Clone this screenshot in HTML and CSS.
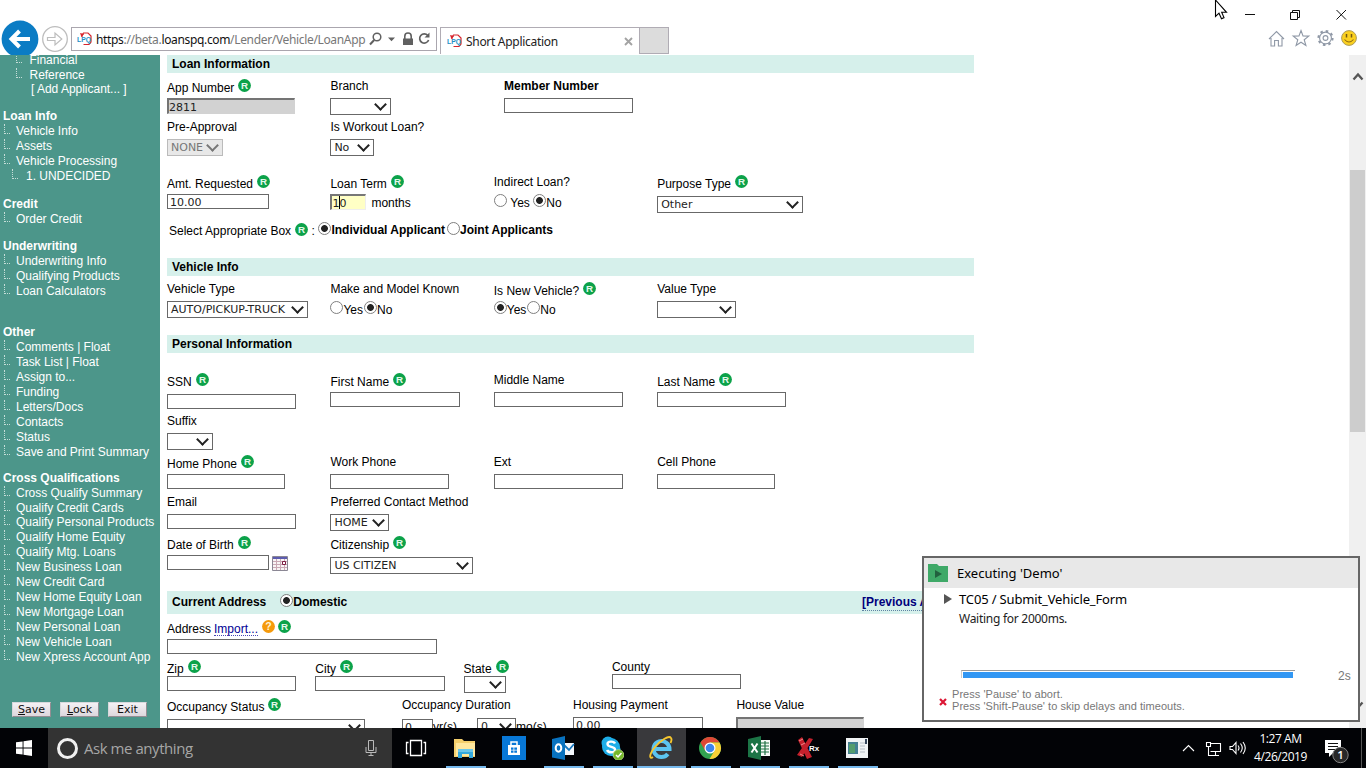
FILE: index.html
```
<!DOCTYPE html>
<html lang="en">
<head>
<meta charset="utf-8">
<title>Short Application</title>
<link rel="stylesheet" href="styles.css">
</head>
<body>
<svg class="sprite" aria-hidden="true">
  <symbol id="req" viewBox="0 0 13 13"><circle cx="6.5" cy="6.5" r="6.4" fill="#0ca24a"/><text x="6.5" y="10" text-anchor="middle" font-family="Liberation Sans, sans-serif" font-size="9.8" font-weight="bold" fill="#e4f7ea">R</text></symbol>
  <symbol id="help" viewBox="0 0 13 13"><circle cx="6.5" cy="6.5" r="6.4" fill="#f59a0c"/><text x="6.5" y="10.2" text-anchor="middle" font-family="Liberation Sans, sans-serif" font-size="10.5" font-weight="bold" fill="#fff5d8">?</text></symbol>
  <symbol id="lpq" viewBox="0 0 15 14"><path d="M5 5V3.5L6.5 1H11L14 4V10L12 12.5H6.5" fill="none" stroke="#d6242c" stroke-width="1.2"/><path d="M3 1L7.2 2L4.4 5Z" fill="#d6242c"/><text x="0" y="10.4" font-family="Liberation Sans, sans-serif" font-size="6.8" font-weight="bold" fill="#1e8fc6">LPQ</text></symbol>
</svg>

<header class="chrome">
  <div class="nav">
    <svg class="back" viewBox="0 0 38 38"><circle cx="19" cy="19" r="18.4" fill="#0b7cc4"/><path d="M29 19H11M18.5 11L10.5 19L18.5 27" fill="none" stroke="#fff" stroke-width="4"/></svg>
    <svg class="forward" viewBox="0 0 28 28"><circle cx="14" cy="14" r="12.3" fill="#fff" stroke="#bdbdbd" stroke-width="1.3"/><path d="M6.5 12.5H14V8L20.8 14L14 20V15.5H6.5Z" fill="#fff" stroke="#bdbdbd" stroke-width="1.2"/></svg>
    <div class="address">
      <svg class="fav"><use href="#lpq"/></svg>
      <span class="url"><b>https</b>://beta.<b>loanspq.com</b>/Lender/Vehicle/LoanApp</span>
      <svg class="addr-icons" viewBox="0 0 64 18"><g fill="none" stroke="#606060"><circle cx="9" cy="7" r="3.8" stroke-width="1.5"/><path d="M6.2 10L2 14.5" stroke-width="2"/><path d="M36.8 9V6.2a3.2 3.2 0 0 1 6.4 0V9" stroke-width="1.6"/><path d="M59.8 5.5A4.6 4.6 0 1 0 60.6 10" stroke-width="1.7"/></g><path d="M20 7.5h7l-3.5 3.8zM35 8.5h10v6.5H35zM61.5 2.5v5h-5z" fill="#606060"/></svg>
    </div>
  </div>
  <div class="tab"><svg class="fav"><use href="#lpq"/></svg><span class="tab-title">Short Application</span><svg class="tab-x" viewBox="0 0 9 9"><path d="M1 1L8 8M8 1L1 8" stroke="#a3a3a3" stroke-width="1.9"/></svg></div>
  <div class="newtab"></div>
  <div class="window-side">
    <svg class="caption" viewBox="0 0 106 14"><g fill="none" stroke="#111" stroke-width="1"><path d="M0 7.5h10"/><path d="M45.500 5.500h7v7h-7zM47.500 5.500v-2h7v7h-2"/><path d="M91.500 3L101 12.500M101 3L91.500 12.500"/></g></svg>
    <svg class="tools" viewBox="0 0 92 20"><g fill="none" stroke="#8f98a6" stroke-width="1.1"><path d="M2 11L9.500 3.500L17 11M4 10v8h3.600v-5.500h3.800V18H15v-8"/><path d="M34 2.500l2 5.400 5.800.2-4.600 3.600 1.700 5.800-4.900-3.300-4.900 3.300 1.700-5.800-4.600-3.600 5.800-.2z"/><circle cx="58.500" cy="10" r="5.900"/><circle cx="58.500" cy="10" r="7" stroke-width="2.200" stroke-dasharray="2.500 3"/><circle cx="58.500" cy="10" r="2.400"/></g><circle cx="82" cy="10" r="7.400" fill="#fbd01f" stroke="#ad9c59"/><path d="M79.500 6v3.500M84.500 6v3.500" stroke="#735915" stroke-width="1.500"/><path d="M77.500 11.500q4.500 5 9 0" fill="none" stroke="#8d6b13" stroke-width="1.100"/></svg>
  </div>
</header>

<main class="viewport">
  <aside class="side">
    <ul class="group group-top"><li class="deep">Financial</li><li class="deep">Reference</li><li class="add">[ Add Applicant... ]</li></ul>
    <h3 class="g12">Loan Info</h3>
    <ul class="group"><li>Vehicle Info</li><li>Assets</li><li>Vehicle Processing</li><li class="sub">1. UNDECIDED</li></ul>
    <h3 class="g13">Credit</h3>
    <ul class="group"><li>Order Credit</li></ul>
    <h3 class="g12">Underwriting</h3>
    <ul class="group"><li>Underwriting Info</li><li>Qualifying Products</li><li>Loan Calculators</li></ul>
    <h3 class="g26">Other</h3>
    <ul class="group"><li>Comments | Float</li><li>Task List | Float</li><li>Assign to...</li><li>Funding</li><li>Letters/Docs</li><li>Contacts</li><li>Status</li><li>Save and Print Summary</li></ul>
    <h3>Cross Qualifications</h3>
    <ul class="group"><li>Cross Qualify Summary</li><li class="short">Qualify Credit Cards</li><li>Qualify Personal Products</li><li>Qualify Home Equity</li><li>Qualify Mtg. Loans</li><li>New Business Loan</li><li>New Credit Card</li><li>New Home Equity Loan</li><li>New Mortgage Loan</li><li>New Personal Loan</li><li>New Vehicle Loan</li><li>New Xpress Account App</li></ul>
    <div class="actions"><button><u>S</u>ave</button><button><u>L</u>ock</button><button>Exit</button></div>
  </aside>

  <section class="form">
    <h2>Loan Information</h2>
    <div class="row h41 mt5">
      <div class="field"><div class="label req">App Number<svg><use href="#req"/></svg></div><div class="input readonly w128">2811</div></div>
      <div class="field member-gap"><div class="label">Branch</div><div class="select w61"></div></div>
      <div class="field"><div class="label bold">Member Number</div><div class="input w129"></div></div>
    </div>
    <div class="row h55">
      <div class="field"><div class="label">Pre-Approval</div><div class="select disabled w56">NONE</div></div>
      <div class="field"><div class="label">Is Workout Loan?</div><div class="select w44">No</div></div>
    </div>
    <div class="row h48">
      <div class="field"><div class="label req">Amt. Requested<svg><use href="#req"/></svg></div><div class="input w102">10.00</div></div>
      <div class="field"><div class="label req">Loan Term<svg><use href="#req"/></svg></div><div class="inline"><div class="input active w36">1<i class="caret"></i>0</div><span class="months">months</span></div></div>
      <div class="field"><div class="label">Indirect Loan?</div><div class="radios"><i class="radio"></i><span class="spaced">Yes</span><i class="radio on"></i><span>No</span></div></div>
      <div class="field"><div class="label req">Purpose Type<svg><use href="#req"/></svg></div><div class="select down2 w146">Other</div></div>
    </div>
    <div class="row boxline"><span>Select Appropriate Box</span><svg><use href="#req"/></svg><span class="colon">:</span><i class="radio on"></i><b>Individual Applicant</b><i class="radio joint"></i><b>Joint Applicants</b></div>

    <h2>Vehicle Info</h2>
    <div class="row h54 mt5">
      <div class="field"><div class="label">Vehicle Type</div><div class="select w141">AUTO/PICKUP-TRUCK</div></div>
      <div class="field"><div class="label">Make and Model Known</div><div class="radios tight"><i class="radio"></i><span>Yes</span><i class="radio on"></i><span>No</span></div></div>
      <div class="field"><div class="label req">Is New Vehicle?<svg><use href="#req"/></svg></div><div class="radios tight"><i class="radio on"></i><span>Yes</span><i class="radio"></i><span>No</span></div></div>
      <div class="field"><div class="label">Value Type</div><div class="select w79"></div></div>
    </div>

    <h2>Personal Information</h2>
    <div class="row h41 mt19">
      <div class="field"><div class="label req">SSN<svg><use href="#req"/></svg></div><div class="input down2 w129"></div></div>
      <div class="field"><div class="label req">First Name<svg><use href="#req"/></svg></div><div class="input w130"></div></div>
      <div class="field"><div class="label">Middle Name</div><div class="input w129"></div></div>
      <div class="field"><div class="label req">Last Name<svg><use href="#req"/></svg></div><div class="input w129"></div></div>
    </div>
    <div class="row h41"><div class="field"><div class="label">Suffix</div><div class="select w46"></div></div></div>
    <div class="row h40">
      <div class="field"><div class="label req">Home Phone<svg><use href="#req"/></svg></div><div class="input w118"></div></div>
      <div class="field"><div class="label">Work Phone</div><div class="input w119"></div></div>
      <div class="field"><div class="label">Ext</div><div class="input w129"></div></div>
      <div class="field"><div class="label">Cell Phone</div><div class="input w118"></div></div>
    </div>
    <div class="row h41">
      <div class="field"><div class="label">Email</div><div class="input w129"></div></div>
      <div class="field"><div class="label">Preferred Contact Method</div><div class="select w59">HOME</div></div>
    </div>
    <div class="row h56">
      <div class="field"><div class="label req">Date of Birth<svg><use href="#req"/></svg></div><div class="inline"><div class="input w102"></div><svg class="calendar" viewBox="0 0 16 15"><path d="M.5.5h15v14H.5z" fill="#f8f4f5" stroke="#8b8794"/><path d="M1 5.500h14M1 8.500h14M1 11.500h14M4.500 3v11M8.500 3v11M12.500 3v11" stroke="#caa9b5" fill="none"/><path d="M1 1h14v2H1z" fill="#5c5caf"/><path d="M10.500 5.500h3v3h-3z" fill="#fff" stroke="#7d1d42"/></svg></div></div>
      <div class="field"><div class="label req">Citizenship<svg><use href="#req"/></svg></div><div class="select down2 w143">US CITIZEN</div></div>
    </div>

    <h2 class="tall"><span>Current Address</span><i class="radio on"></i><span>Domestic</span><a class="previous">[Previous Address]</a></h2>
    <div class="row h40 mt5">
      <div class="field"><div class="label req">Address<a class="import">Import...</a><svg><use href="#help"/></svg><svg class="r2"><use href="#req"/></svg></div><div class="input w270"></div></div>
    </div>
    <div class="row row-city h38">
      <div class="field"><div class="label req">Zip<svg><use href="#req"/></svg></div><div class="input w129"></div></div>
      <div class="field"><div class="label req">City<svg><use href="#req"/></svg></div><div class="input w130"></div></div>
      <div class="field"><div class="label req">State<svg><use href="#req"/></svg></div><div class="select w42"></div></div>
      <div class="field county"><div class="label">County</div><div class="input w129"></div></div>
    </div>
    <div class="row row-occ">
      <div class="field occ"><div class="label req">Occupancy Status<svg><use href="#req"/></svg></div><div class="select down2 w198"></div></div>
      <div class="field dur"><div class="label">Occupancy Duration</div><div class="inline"><div class="input down2 w31">0</div><span class="unit yrs">yr(s)</span><div class="select down1 w39">0</div><span class="unit">mo(s)</span></div></div>
      <div class="field"><div class="label">Housing Payment</div><div class="input w130">0.00</div></div>
      <div class="field"><div class="label">House Value</div><div class="input readonly w128"></div></div>
    </div>
  </section>

  <div class="scroll"><svg viewBox="0 0 16 16"><path d="M3.500 11.500L8 6.500L12.500 11.500" fill="none" stroke="#555" stroke-width="2.300"/></svg><div class="thumb"></div><svg class="down" viewBox="0 0 16 16"><path d="M3.500 5.500L8 10.500L12.500 5.500" fill="none" stroke="#555" stroke-width="2.300"/></svg></div>
</main>

<footer class="taskbar">
  <div class="start"><svg viewBox="0 0 16 16"><path d="M0 2.300L6.600 1.400V7.500H0zM7.500 1.200L16 0V7.500H7.500zM0 8.400H6.600V14.600L0 13.700zM7.500 8.400H16V16L7.500 14.800z" fill="#fff"/></svg></div>
  <div class="ask"><i class="ring"></i><span>Ask me anything</span><svg viewBox="0 0 12 18"><path d="M3.500 1.500h5v10h-5zM1 8v5.500h10V8M6 14v3M3.500 16.500h5" fill="none" stroke="#bababa"/></svg></div>
  <div class="app view"><svg viewBox="0 0 24 24"><path d="M6.500 4.500h11v15h-11zM4.500 6.500h-2v11h2M19.500 6.500h2v11h-2" fill="none" stroke="#fff" stroke-width="1.300"/></svg></div>
  <div class="app run"><svg viewBox="0 0 24 24"><path d="M1 3h8l2 2h11v16H1z" fill="#f4cf6c"/><path d="M3 7h19v13H3z" fill="#ffe79d"/><path d="M5 13h15v9h-4v-4H9v4H5z" fill="#35a9dc"/><path d="M5 13h15v3H5z" fill="#6bc7e9"/></svg></div>
  <div class="app"><svg viewBox="0 0 24 24"><path d="M0 0h24v24H0z" fill="#0878d7"/><path d="M6 9h12v10H6z" fill="#fff"/><path d="M9 9V6h6v3" fill="none" stroke="#fff" stroke-width="1.500"/><path d="M9 11.500h2.500v2.200H9zm3.300 0H15v2.200h-2.700zM9 14.500h2.500v2.200H9zm3.300 0H15v2.200h-2.700z" fill="#0878d7"/></svg></div>
  <div class="app run"><svg viewBox="0 0 24 24"><path d="M12 7h11v12H12z" fill="#f4f8fc"/><path d="M13 9l5 5 5-6" fill="none" stroke="#1476be" stroke-width="1.800"/><path d="M1 3L14 0v24L1 21.500z" fill="#0872bf"/><ellipse cx="7.500" cy="12" rx="2.800" ry="3.700" fill="none" stroke="#fff" stroke-width="2"/></svg></div>
  <div class="app run"><svg viewBox="0 0 24 24"><circle cx="8" cy="7" r="6.500" fill="#1eaee8"/><circle cx="14" cy="14" r="6.500" fill="#1eaee8"/><circle cx="11" cy="11" r="9" fill="#1eaee8"/><path d="M15 7.500c-1-2.500-7.500-2.800-7.500.6 0 3.700 7.600 2 7.600 5.600 0 3.600-7 3.200-8 .3" fill="none" stroke="#fff" stroke-width="2.400"/><circle cx="18.500" cy="19" r="5.300" fill="#75b82b" stroke="#b9db80" stroke-width=".8"/><path d="M16 19l2 2 3.500-4" fill="none" stroke="#fff" stroke-width="1.500"/></svg></div>
  <div class="app run current"><svg viewBox="0 0 24 24"><path d="M5.500 13H20.500A8 8 0 1 0 18.800 18" fill="none" stroke="#5cc4f0" stroke-width="4"/><path d="M4 21C0 24 0 18 6 11C12 4 20-1 22 2C23 3.300 22.500 5 21.500 7" fill="none" stroke="#f7c72e" stroke-width="1.900"/></svg></div>
  <div class="app run"><svg viewBox="0 0 24 24"><circle cx="12" cy="12" r="11" fill="#32a350"/><path d="M2.500 6.500A11 11 0 0 1 21.500 6.500H12L7.300 15z" fill="#df4735"/><path d="M21.500 6.500A11 11 0 0 1 11.500 23L16.700 14.500L12 6.500z" fill="#f8cf35"/><circle cx="12" cy="12" r="5.500" fill="#fff"/><circle cx="12" cy="12" r="4.300" fill="#3d84ed"/></svg></div>
  <div class="app run"><svg viewBox="0 0 24 24"><path d="M12 4h11v16H12z" fill="#f5fbf7"/><path d="M14 7h8M14 10h8M14 13h8M14 16h8M18 5v14" stroke="#207245" stroke-width="1.200"/><path d="M1 3L14 0v24L1 21z" fill="#1c7446"/><path d="M4.500 7.500l6 9M10.500 7.500l-6 9" stroke="#fff" stroke-width="2"/></svg></div>
  <div class="app run"><svg viewBox="0 0 24 24"><path d="M2 4L6 1L16 21L11 23zM13 2L17 3L6 21L1 19z" fill="#c4202c"/><path d="M3 5L7 3M5 9L9 7M4 18L8 20" stroke="#f18a8c"/><text x="13" y="15" font-family="Liberation Sans, sans-serif" font-size="8" font-weight="bold" fill="#fff">Rx</text></svg></div>
  <div class="app run"><svg viewBox="0 0 24 24"><path d="M1 2h22v20H1z" fill="#f0f3f4"/><path d="M3 6h10v12H3z" fill="#437f91"/><path d="M4 8h6v9H4z" fill="#539c6c"/><path d="M15 7h5M15 10h5M15 13h5M15 16h5" stroke="#b5bdc4"/><path d="M20 3h2v5h-2z" fill="#35465a"/></svg></div>
  <div class="tray">
    <svg class="tray-icons" viewBox="0 0 64 20"><g fill="none" stroke="#fff" stroke-width="1.100"><path d="M1 13l5.500-5.500L12 13"/><path d="M28.500 5.500h10v8h-10M33.500 13.500v3.500M29 17.500h8M24.500 4.500h4v4h-4zM26.500 8.500v9h3"/><path d="M48 8.500h2.500l3.500-4v11l-3.500-4H48zM56 7.500q2 2.500 0 5M58.500 5.500q3.500 4.500 0 9M61 4q4.500 6 0 12"/></g></svg>
    <div class="clock"><span>1:27 AM</span><span>4/26/2019</span></div>
    <svg class="notes" viewBox="0 0 26 26"><path d="M1 2h16v13H9l-4 4v-4H1z" fill="#fff"/><path d="M4 5.500h10M4 8.500h10M4 11.500h7" stroke="#111"/><circle cx="16.500" cy="17" r="7.700" fill="#282828" stroke="#838383"/><text x="16.500" y="21.300" text-anchor="middle" font-family="Open Sans, sans-serif" font-size="11.500" font-weight="600" fill="#fff">1</text></svg>
    <i class="peek"></i>
  </div>
</footer>

<div class="toast">
  <div class="toast-head"><svg viewBox="0 0 20 18"><path d="M0 0h9l2 2h9v16H0z" fill="#3fa968"/><path d="M7 6l7 4-7 4z" fill="#22613f"/></svg><span>Executing 'Demo'</span></div>
  <div class="toast-case"><i></i><span>TC05 / Submit_Vehicle_Form</span></div>
  <div class="toast-wait">Waiting for 2000ms.</div>
  <div class="toast-progress"><div class="track"><div class="bar"></div></div><span>2s</span></div>
  <div class="toast-help"><svg viewBox="0 0 8 8"><path d="M1 1l6 6M7 1L1 7" stroke="#dc1735" stroke-width="2.200"/></svg><p>Press 'Pause' to abort.<br>Press 'Shift-Pause' to skip delays and timeouts.</p></div>
</div>
<svg class="cursor" viewBox="0 0 14 21"><path d="M1.500 0V16.500L5 13.200L7.500 18.700L10 17.600L7.700 12.300H12.500z" fill="#fff" stroke="#000" stroke-width="1.100"/></svg>
</body>
</html>
```
FILE: styles.css
```
* { box-sizing: border-box; }
body { margin: 0; width: 1366px; height: 768px; overflow: hidden; position: relative; display: flex; flex-direction: column; background: #fff; color: #000; font: 12px/16px "Liberation Sans", Arial, sans-serif; }
svg { display: block; flex: none; }
h2, h3, ul, p { margin: 0; padding: 0; }
ul { list-style: none; }
.sprite { display: none; }

.chrome { height: 55px; flex: none; display: flex; align-items: flex-start; font-family: "Noto Sans", sans-serif; }
.nav { width: 440px; height: 55px; display: flex; overflow: hidden; }
.back { width: 38px; height: 38px; margin: 20px 0 0 1px; }
.forward { width: 28px; height: 28px; margin: 25px 0 0 2px; }
.address { width: 366px; height: 24px; margin: 27px 0 0 2px; border: 1px solid #aaa6ae; display: flex; align-items: center; }
.fav { width: 15px; height: 14px; margin-left: 5px; }
.url { width: 270px; margin-left: 4px; padding-top: 1px; white-space: nowrap; color: #777; letter-spacing: -.34px; }
.url b { font-weight: 400; color: #111; }
.addr-icons { width: 64px; height: 18px; margin-left: 2px; }
.tab { width: 200px; height: 27px; margin-top: 27px; border: 1px solid #b0acb4; border-bottom: 0; display: flex; align-items: center; }
.tab .fav { margin-left: 6px; }
.tab-title { margin-left: 4px; padding-top: 1px; flex: 1; color: #222; letter-spacing: -.3px; }
.tab-x { width: 9px; height: 9px; margin-right: 6px; }
.newtab { width: 29px; height: 27px; margin-top: 27px; background: #dcdcdc; border: 1px solid #b0acb4; border-left: 0; }
.window-side { margin-left: auto; width: 126px; padding-top: 7px; }
.caption { width: 106px; height: 14px; margin-left: 5px; }
.tools { width: 92px; height: 20px; margin: 7px 0 0 27px; }

.viewport { height: 673px; display: flex; overflow: hidden; flex: none; }
.side { width: 160px; height: 673px; background: #4c968a; color: #fff; line-height: 15px; overflow: hidden; white-space: nowrap; }
.side h3 { font-size: 12px; line-height: 15px; padding-left: 3px; margin-top: 11px; }
.side .g13 { margin-top: 13px; }
.side .g12 { margin-top: 12px; }
.side .g26 { margin-top: 26px; }
.group li { height: 15px; display: flex; padding-left: 4px; letter-spacing: -.02px; }
.group li::before { content: ""; width: 5px; height: 9px; margin-right: 6px; border-left: 1px dotted #c5ddd8; border-bottom: 1px dotted #c5ddd8; }
.group-top { margin-top: -2px; }
.group .deep { padding-left: 16px; }
.group .deep::before { margin-right: 7.500px; }
.group .sub { padding-left: 12px; }
.group .sub::before { margin-right: 8px; }
.group .short { height: 14px; }
.group .add { height: 14px; line-height: 13px; padding-left: 31px; }
.group .add::before { display: none; }
.actions { display: flex; gap: 9px; padding: 37px 0 0 12px; }
.actions button { width: 39px; height: 15px; padding: 0; border: 1px solid #d8d8dc; border-right-color: #948d93; border-bottom-color: #948d93; background: linear-gradient(#f4f1f4, #ddd7dd); font: 11px/12px "DejaVu Sans", sans-serif; color: #111; }

.form { width: 1189px; padding-left: 7px; overflow: hidden; }
.form h2 { width: 807px; height: 18px; padding-left: 5px; background: #d6f0eb; font-size: 12px; line-height: 18px; }
.form .tall { height: 23px; line-height: 22px; display: flex; }
.tall .radio { margin: 3px 0 0 14px; }
.previous { margin-left: auto; width: 112px; height: 20px; color: #00007c; border-bottom: 1px dotted #5e83a3; white-space: nowrap; }
.row { display: flex; }
.field { width: 163.400px; flex: none; }
.member-gap { width: 173.600px; }
.mt5 { margin-top: 5px; }
.mt19 { margin-top: 19px; }
.h38 { height: 38px; }
.h40 { height: 40px; }
.h41 { height: 41px; }
.h48 { height: 48px; }
.h54 { height: 54px; }
.h55 { height: 55px; }
.h56 { height: 56px; }
.label { height: 20px; line-height: 16px; display: flex; align-items: flex-start; white-space: nowrap; }
.label.req { line-height: 20px; }
.label.bold { font-weight: 700; }
.label svg { width: 13px; height: 13px; margin: 1px 0 0 4px; }
.label .r2 { margin-left: 3px; }
.import { margin-left: 3px; color: #000094; height: 17px; border-bottom: 1px dotted #4646b5; }
.input, .select { height: 15px; border: 1px solid #686868; background: #fff; padding-left: 2px; color: #222; font: 11px/15px "DejaVu Sans", Verdana, sans-serif; overflow: hidden; white-space: nowrap; flex: none; }
.select { height: 17px; line-height: 16px; padding-left: 3px; position: relative; }
.select::after { content: ""; position: absolute; right: 5px; top: 2px; width: 7px; height: 7px; border: solid #222; border-width: 0 2px 2px 0; transform: translateY(-1px) rotate(45deg); }
.disabled { color: #777; background: #e8e8e8; border-color: #bbb; }
.disabled::after { border-color: #777; }
.readonly { height: 16px; background: #d2d2d2; border-color: #747474 #d2d2d2 #d2d2d2 #747474; border-width: 2px 1px 1px 2px; padding-left: 0; }
.active { height: 16px; background: #ffffc5; border-width: 2px 1px 1px 2px; border-color: #777 #eee #eee #777; padding-left: 0; display: flex; line-height: 15px; }
.caret { width: 1px; height: 13px; background: #000; margin-right: -1px; }
.down1 { margin-top: 1px; }
.down2 { margin-top: 2px; }
.inline { display: flex; }
.months { margin-left: 5px; line-height: 18px; }
.radio { width: 13px; height: 13px; flex: none; border: 1px solid #808080; border-radius: 50%; background: #fff; }
.radio.on { background: radial-gradient(circle, #222 0 3px, #fff 3.800px); }
.radios { display: flex; line-height: 18px; }
.tight span + .radio { margin-left: 1px; }
.spaced { margin: 0 3.500px; }
.calendar { width: 16px; height: 15px; margin: 1px 0 0 3px; }
.boxline { height: 36px; padding-left: 2px; line-height: 18px; }
.boxline svg { width: 13px; height: 13px; margin: 1px 0 0 4px; }
.colon { margin: 0 3.500px; }
.boxline b { line-height: 17px; }
.joint { margin-left: 2px; }
.row-city .field { width: 148.300px; }
.row-city .label { height: 17px; }
.row-city .county .label { height: 15px; }
.field.occ { width: 235px; }
.field.dur { width: 171px; }
.unit { line-height: 21px; }
.yrs { width: 44px; }
.w31 { width: 31px; }
.w36 { width: 36px; }
.w39 { width: 39px; }
.w42 { width: 42px; }
.w44 { width: 44px; }
.w46 { width: 46px; }
.w56 { width: 56px; }
.w59 { width: 59px; }
.w61 { width: 61px; }
.w79 { width: 79px; }
.w102 { width: 102px; }
.w118 { width: 118px; }
.w119 { width: 119px; }
.w128 { width: 128px; }
.w129 { width: 129px; }
.w130 { width: 130px; }
.w141 { width: 141px; }
.w143 { width: 143px; }
.w146 { width: 146px; }
.w198 { width: 198px; }
.w270 { width: 270px; }

.scroll { width: 17px; height: 673px; padding: 13px 0 0 1px; background: #f0f0f0; display: flex; flex-direction: column; }
.scroll svg { width: 16px; height: 16px; }
.thumb { width: 15px; height: 262px; margin-top: 86px; background: #cdcdcd; }
.scroll .down { margin-top: auto; margin-bottom: 15px; }

.taskbar { height: 40px; flex: none; display: flex; background: #020306; color: #fff; font-family: "Open Sans", sans-serif; }
.start { width: 48px; padding: 12px 0 0 16px; }
.start svg { width: 16px; height: 16px; }
.ask { width: 344px; background: #333; display: flex; align-items: center; color: #a6a6a6; font-size: 15px; letter-spacing: -.45px; }
.ask .ring { width: 21px; height: 21px; margin-left: 9px; border: 3px solid #f0f0f0; border-radius: 50%; }
.ask span { margin-left: 6px; flex: 1; white-space: nowrap; }
.ask svg { width: 12px; height: 18px; margin-right: 15px; }
.app { width: 49px; height: 40px; padding: 8px 12px; flex: none; }
.app svg { width: 24px; height: 24px; }
.run { background: linear-gradient(#76b9ed, #76b9ed) 50% 100% / 40px 2px no-repeat; }
.current { background: linear-gradient(#76b9ed, #76b9ed) 50% 100% / 49px 2px no-repeat #39393c; }
.tray { margin-left: auto; display: flex; width: 184px; }
.tray-icons { width: 64px; height: 20px; margin-top: 10px; }
.clock { width: 68px; display: flex; flex-direction: column; text-align: center; line-height: 18px; padding: 2px 0 0 1px; font-size: 12px; letter-spacing: -.45px; }
.notes { width: 26px; height: 26px; margin: 10px 0 0 10px; }
.peek { width: 1px; height: 40px; background: #555; margin-left: 11px; }

.toast { position: absolute; left: 922px; top: 556px; width: 438px; height: 166px; border: 2px solid #666; background: #fff; font-family: "Noto Sans", sans-serif; }
.toast-head { height: 30px; background: #e8e8e8; display: flex; align-items: center; padding-left: 4px; font-size: 13px; }
.toast-head svg { width: 20px; height: 18px; }
.toast-head span { margin-left: 9px; }
.toast-case { display: flex; align-items: center; height: 22px; padding-left: 20px; font-size: 13px; letter-spacing: -.15px; }
.toast-case i { border-left: 8px solid #555; border-top: 5px solid transparent; border-bottom: 5px solid transparent; }
.toast-case span { margin-left: 7px; }
.toast-wait { padding: 1px 0 0 35px; line-height: 16px; color: #222; letter-spacing: -.27px; }
.toast-progress { display: flex; padding: 43px 0 0 37px; color: #777; font-family: "Liberation Sans", sans-serif; }
.track { width: 334px; height: 8px; border-top: 1px solid #999; border-left: 1px solid #ccc; padding: 1px 0 0 1px; }
.bar { width: 330px; height: 6px; background: #3297f3; }
.toast-progress span { margin-left: 43px; line-height: 13px; }
.toast-help { display: flex; padding: 5px 0 0 15px; color: #777; font: 11px/12px "Liberation Sans", sans-serif; letter-spacing: .04px; }
.toast-help svg { width: 8px; height: 8px; margin-top: 10px; }
.toast-help p { margin-left: 5px; white-space: nowrap; }
.cursor { position: absolute; left: 1214px; top: 0; width: 14px; height: 21px; }
```
